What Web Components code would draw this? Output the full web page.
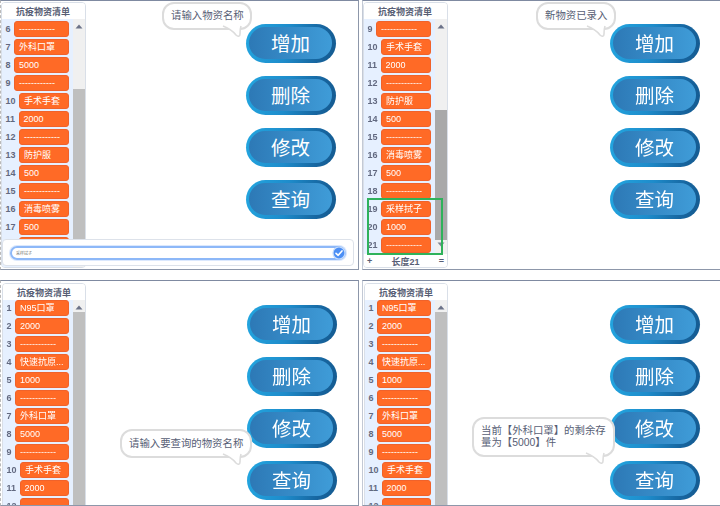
<!DOCTYPE html>
<html lang="zh">
<head>
<meta charset="utf-8">
<title>抗疫物资清单</title>
<style>
html,body{margin:0;padding:0;background:#fff;overflow:hidden}
body{font-family:"Liberation Sans","Noto Sans CJK SC",sans-serif;color:#575e75}
</style>
</head>
<body>
<sb-sheet>
  <sb-stage>
    <sb-monitor start="6" thumb-top="70" thumb-height="151" height="266" items="------------|外科口罩|5000|------------|手术手套|2000|------------|防护服|500|------------|消毒喷雾|500|------------" pad="2"></sb-monitor>
    <sb-buttons offset="160" top="23"></sb-buttons>
    <sb-bubble left="161" top="1" w="90" h="28">请输入物资名称</sb-bubble>
    <sb-ask value="采样拭子"></sb-ask>
  </sb-stage>
  <sb-stage right>
    <sb-monitor start="9" thumb-top="91" thumb-height="130" thumb-color="#a9a9a9" height="266" footer="长度21" pad="2" down items="------------|手术手套|2000|------------|防护服|500|------------|消毒喷雾|500|------------|采样拭子|1000|------------"></sb-monitor>
    <sb-buttons offset="162" top="23"></sb-buttons>
    <sb-bubble left="173" top="1" w="80" h="28">新物资已录入</sb-bubble>
    <sb-highlight></sb-highlight>
  </sb-stage>
  <sb-stage>
    <sb-monitor start="1" shift="1" lower thumb-top="12" thumb-height="200" height="240" items="N95口罩|2000|------------|快速抗原...|1000|------------|外科口罩|5000|------------|手术手套|2000|------------"></sb-monitor>
    <sb-buttons offset="161" top="24"></sb-buttons>
    <sb-bubble left="119" top="148" w="132" h="29">请输入要查询的物资名称</sb-bubble>
  </sb-stage>
  <sb-stage right>
    <sb-monitor start="1" shift="1" lower thumb-top="12" thumb-height="200" height="240" items="N95口罩|2000|------------|快速抗原...|1000|------------|外科口罩|5000|------------|手术手套|2000|------------"></sb-monitor>
    <sb-buttons offset="162" top="24"></sb-buttons>
    <sb-bubble left="109" top="136" w="143" h="40">当前【外科口罩】的剩余存<br>量为【5000】件</sb-bubble>
  </sb-stage>
</sb-sheet>
<script>
const FONT = '"Liberation Sans","Noto Sans CJK SC",sans-serif';

function shadow(el, html) {
  el.attachShadow({ mode: 'open' }).innerHTML = html;
}

customElements.define('sb-sheet', class extends HTMLElement {
  constructor() {
    super();
    shadow(this, `<style>
      :host{display:grid;grid-template-columns:359px 358px;grid-template-rows:270px 226px;column-gap:3px;row-gap:10px;width:720px;height:506px;overflow:hidden;font-family:${FONT};filter:blur(.35px)}
    </style><slot></slot>`);
  }
});

customElements.define('sb-stage', class extends HTMLElement {
  constructor() {
    super();
    shadow(this, `<style>
      :host{display:flex;position:relative;box-sizing:border-box;overflow:hidden;background:#fff;
        border-top:1px solid #7f8aa1;border-bottom:1px solid #8d97aa;border-right:1px solid #8d97aa;border-left:1px dashed #b9b9b9;align-items:flex-start}
      :host([right]){border-right:0;border-left:1px solid #c3c9d5}
    </style><slot></slot>`);
  }
});

customElements.define('sb-monitor', class extends HTMLElement {
  connectedCallback() {
    if (this.shadowRoot) return;
    const a = n => this.getAttribute(n);
    const start = +a('start');
    const lower = this.hasAttribute('lower');
    const rows = a('items').split('|').map((t, i) =>
      `<div class="row"><span class="idx">${start + i}</span><span class="val">${t}</span></div>`).join('');
    const footer = a('footer');
    shadow(this, `<style>
      :host{display:flex;flex-direction:column;flex:none;box-sizing:border-box;width:${lower ? 84 : 85}px;height:${a('height')}px;
        margin:${lower ? 2 : 1}px 0 0 ${a('shift') || 0}px;background:#fff;border:1px solid #d9dfe8;border-radius:4px;overflow:hidden;color:#575e75}
      .head{flex:none;height:16px;display:flex;align-items:center;justify-content:center;font-size:9px;font-weight:700;background:#fff;padding-right:${lower ? 0 : 1}px}
      .body{flex:1;display:flex;min-height:0;background:#e6f0ff}
      .rows{width:${lower ? 70 : 71}px;flex:none;box-sizing:border-box;padding:${a('pad') || 0}px 4px 0 0;overflow:hidden}
      .row{display:flex;height:16px;margin-bottom:2px;align-items:center}
      .idx{flex:none;padding:0 3.5px;font-size:9px;font-weight:700;line-height:16px;color:#626980}
      .val{flex:1;min-width:0;box-sizing:border-box;height:16px;line-height:14px;padding-left:4px;font-size:9px;color:#fff;background:#ff6a26;border:1px solid #f0622a;border-radius:3px;white-space:nowrap;overflow:hidden}
      .bar{position:relative;flex:1;background:#f0f0f0;overflow:hidden}
      .thumb{width:12px;margin-top:${a('thumb-top')}px;height:${a('thumb-height')}px;background:${a('thumb-color') || '#bfbfbf'}}
      svg{position:absolute;left:2px;width:8px;height:5px}
      .up{top:5px}
      .dn{top:223px}
      .foot{flex:none;height:13px;display:flex;align-items:center;justify-content:space-between;padding:1px 3px 0;box-sizing:border-box;font-size:9px;font-weight:700;background:#fff}
      .foot b{font-size:9px}
    </style>
    <div class="head">抗疫物资清单</div>
    <div class="body">
      <div class="rows">${rows}</div>
      <div class="bar">
        <div class="thumb"></div>
        <svg class="up" viewBox="0 0 8 5"><path d="M4 0.5 7.5 4.5H.5z" fill="#6b7288"/></svg>
        ${this.hasAttribute('down') ? '<svg class="dn" viewBox="0 0 8 5"><path d="M4 4.5 7.5 .5H.5z" fill="#7f8496"/></svg>' : ''}
      </div>
    </div>
    ${footer ? `<div class="foot"><b>+</b><span>${footer}</span><b>=</b></div>` : ''}`);
  }
});

customElements.define('sb-btn', class extends HTMLElement {
  constructor() {
    super();
    shadow(this, `<style>
      :host{display:block;box-sizing:border-box;width:90px;height:39px;padding:3px 4px 4px 3px;border-radius:20px;
        background:linear-gradient(100deg,#23a6e0 0%,#1e8ccb 45%,#17659f 80%,#145a90 100%)}
      div{height:100%;border-radius:16px;background:linear-gradient(90deg,#2d79b6,#3f9cd8);color:#fff;
        display:flex;align-items:center;justify-content:center;font:400 19.5px "Noto Sans CJK SC",sans-serif;line-height:1}
    </style><div><slot></slot></div>`);
  }
});

customElements.define('sb-buttons', class extends HTMLElement {
  connectedCallback() {
    if (this.shadowRoot) return;
    shadow(this, `<style>
      :host{display:flex;flex-direction:column;gap:13px;flex:none;margin-left:${this.getAttribute('offset')}px;margin-top:${this.getAttribute('top')}px}
    </style><sb-btn>增加</sb-btn><sb-btn>删除</sb-btn><sb-btn>修改</sb-btn><sb-btn>查询</sb-btn>`);
  }
});

customElements.define('sb-bubble', class extends HTMLElement {
  connectedCallback() {
    if (this.shadowRoot) return;
    const a = n => this.getAttribute(n);
    shadow(this, `<style>
      :host{position:absolute;z-index:2;left:${a('left')}px;top:${a('top')}px;width:${a('w')}px;height:${a('h')}px;box-sizing:border-box;
        display:flex;align-items:center;padding-left:7px;background:#fff;border:2px solid #dcdcdc;border-radius:12px;
        font-size:10.4px;line-height:12px;color:#575e75;white-space:nowrap}
      svg{position:absolute;right:8px;top:100%;margin-top:-2px;width:19px;height:13px;overflow:visible}
    </style><slot></slot>
    <svg viewBox="0 0 19 13"><path d="M0 0C5 2 10 5 13 9C15 11 17 10.500 17 8C17 5 17 3 18 0" fill="#fff" stroke="#dcdcdc" stroke-width="1.600"/></svg>`);
  }
});

customElements.define('sb-ask', class extends HTMLElement {
  connectedCallback() {
    if (this.shadowRoot) return;
    shadow(this, `<style>
      :host{position:absolute;z-index:1;left:1px;top:238px;width:352px;height:27px;box-sizing:border-box;background:#fff;border:1px solid #dde2ea;border-radius:4px;padding:6px 7px;display:flex}
      .field{flex:1;display:flex;align-items:center;justify-content:space-between;box-sizing:border-box;height:14px;border:2px solid #8db8f8;border-radius:8px;padding-left:4px;box-shadow:0 0 0 1px #dbe8fd;font-size:4px;color:#777}
      svg{width:14px;height:14px;margin-right:-2px;flex:none}
    </style>
    <div class="field"><span>${this.getAttribute('value')}</span>
    <svg viewBox="0 0 14 14"><circle cx="7" cy="7" r="6" fill="#4c8ff5" stroke="#c6dcfb" stroke-width="1.200"/><path d="M4 7.300 6.200 9.300 10 4.900" fill="none" stroke="#fff" stroke-width="1.600" stroke-linecap="round" stroke-linejoin="round"/></svg></div>`);
  }
});

customElements.define('sb-highlight', class extends HTMLElement {
  constructor() {
    super();
    shadow(this, `<style>
      :host{position:absolute;z-index:1;left:4px;top:197px;width:76px;height:57px;box-sizing:border-box;border:2px solid #2fb25b}
    </style>`);
  }
});
</script>
</body>
</html>
